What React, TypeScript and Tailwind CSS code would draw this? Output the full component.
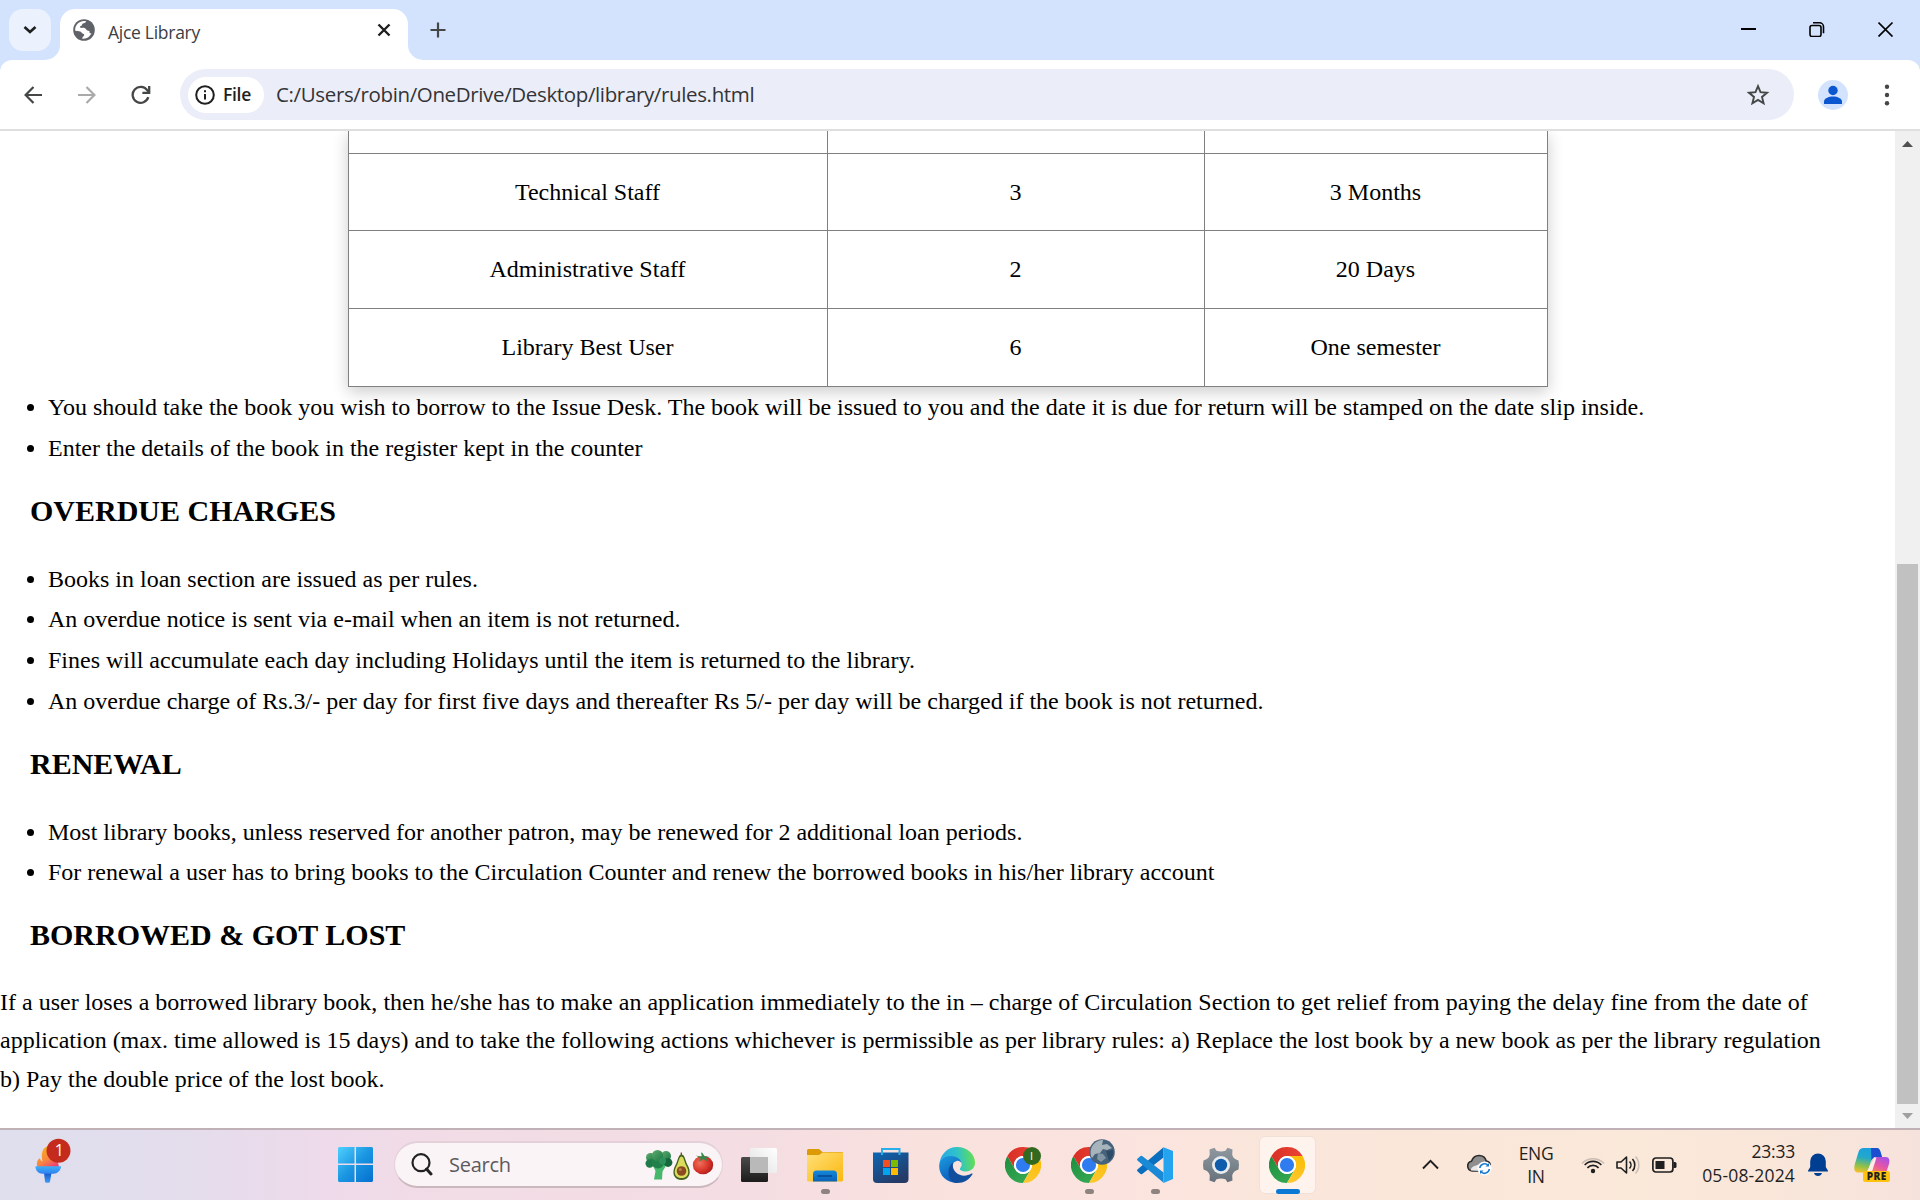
import React from "react";

const rows = [
  ["Technical Staff", "3", "3 Months"],
  ["Administrative Staff", "2", "20 Days"],
  ["Library Best User", "6", "One semester"],
];

function Item({ children }: { children: React.ReactNode }) {
  return (
    <li className="flex h-[40.8px] items-center whitespace-nowrap pl-[27px]">
      <span className="mr-[14px] mt-[1px] size-[7px] shrink-0 rounded-full bg-black" />
      <span>{children}</span>
    </li>
  );
}

function Heading({ children }: { children: React.ReactNode }) {
  return <h2 className="flex h-[89.7px] items-center pb-[5.5px] pl-[30px] text-[30px] font-bold">{children}</h2>;
}

function Chrome({ id }: { id: string }) {
  const d = "M0,-9 L15.59,-9 A18 18 0 0 0 -15.59,-9 L-7.79,4.5 A9 9 0 0 1 0,-9 Z";
  return (
    <svg width="36" height="36" viewBox="-18 -18 36 36">
      <defs>
        <linearGradient id={`r${id}`} x1="0" y1="0" x2="1" y2="0">
          <stop offset="0" stopColor="#d93025" />
          <stop offset="1" stopColor="#ea4335" />
        </linearGradient>
        <linearGradient id={`g${id}`} x1="0" y1="0" x2="1" y2="0">
          <stop offset="0" stopColor="#34a853" />
          <stop offset="1" stopColor="#1e8e3e" />
        </linearGradient>
        <linearGradient id={`y${id}`} x1="0" y1="0" x2="1" y2="0">
          <stop offset="0" stopColor="#fbbc04" />
          <stop offset="1" stopColor="#fcc934" />
        </linearGradient>
      </defs>
      <circle r="12" fill="#fff" />
      <path d={d} fill={`url(#g${id})`} transform="rotate(-120)" />
      <path d={d} fill={`url(#y${id})`} transform="rotate(120)" />
      <path d={d} fill={`url(#r${id})`} />
      <circle r="9" fill="#fff" />
      <circle r="7.1" fill="#2f7cf0" />
    </svg>
  );
}

function Slot({ children, mark }: { children: React.ReactNode; mark?: "dot" | "active" }) {
  return (
    <div className="flex h-full w-[66px] items-center justify-center">
      <div
        className={
          mark === "active"
            ? "relative flex h-[58px] w-[57px] items-center justify-center rounded-[6px] border border-[#f0e0d8] bg-[#fef3ed]"
            : "relative flex h-[58px] w-[57px] items-center justify-center"
        }
      >
        {children}
        {mark === "dot" && <span className="absolute bottom-0 left-[24px] h-[5px] w-[9px] rounded-full bg-[#8f8380]" />}
        {mark === "active" && <span className="absolute -bottom-px left-[16px] h-[5px] w-[24px] rounded-full bg-[#0b78d4]" />}
      </div>
    </div>
  );
}

function TabStrip() {
  return (
    <div className="flex h-[60px] bg-[#d3e3fd] font-['Open_Sans',sans-serif]">
      <div className="ml-[9px] mt-[9px] flex size-[42px] items-center justify-center rounded-[14px] bg-[#ebf2fe]">
        <svg width="14" height="10" viewBox="0 0 14 10" fill="none" stroke="#1f1f1f" strokeWidth="2.6">
          <path d="M1.5 2l5.5 5 5.5-5" />
        </svg>
      </div>
      <div className="flex w-[9px] items-end">
        <svg className="-ml-[6px] shrink-0" width="15" height="15" viewBox="0 0 15 15">
          <path d="M15 0v15H0A15 15 0 0 0 15 0z" fill="#fff" />
        </svg>
      </div>
      <div className="mt-[9px] flex h-[51px] w-[348px] items-start rounded-t-[15px] bg-white pl-[13px]">
        <svg className="mt-[10px]" width="22" height="22" viewBox="0 0 22 22">
          <circle cx="11" cy="11" r="10.8" fill="#5f6368" />
          <path d="M13.2 2.2c-.3 1.5-1.8 1.9-3.4 2.4-.9.4-.4 1.7-1.3 2.2-.9.6-1.8.6-1.5 1.5.4 1 2.6.4 4.4.6 1.9.3 1.6 2.2 3 2.6 1.5.3 2.6.6 2.1 2-.2 1 1.2 1 2 .6a9 9 0 0 1-9.3 5.6c.3-1.5.7-2.2 1.5-2.7.9-.7.6-1.9-.5-2.2-2-.5-1.5-2.2-3-2.4-1.7-.2-3.3-.2-5.1-1A9 9 0 0 1 13.2 2.2z" fill="#fff" />
        </svg>
        <span className="ml-[13px] mt-[11px] text-[17.5px] leading-[24px] tracking-[-0.28px] text-[#3c4043]">Ajce Library</span>
        <svg className="ml-auto mr-[17px] mt-[14px]" width="14" height="14" viewBox="0 0 14 14" stroke="#1f1f1f" strokeWidth="2.4">
          <path d="M1.5 1.5l11 11M12.5 1.5l-11 11" />
        </svg>
      </div>
      <div className="flex w-[15px] items-end">
        <svg width="15" height="15" viewBox="0 0 15 15">
          <path d="M0 0v15h15A15 15 0 0 1 0 0z" fill="#fff" />
        </svg>
      </div>
      <svg className="ml-[7px] mt-[22px]" width="16" height="16" viewBox="0 0 16 16" stroke="#444746" strokeWidth="2.2">
        <path d="M8 .5v15M.5 8h15" />
      </svg>
      <div className="ml-auto mr-[26px] mt-[21px] flex">
        <svg className="mr-[52px]" width="16" height="16" viewBox="0 0 16 16">
          <path d="M0 7h15v2H0z" fill="#000" />
        </svg>
        <svg className="mr-[53px]" width="16" height="16" viewBox="0 0 16 16" fill="none" stroke="#000" strokeWidth="1.6">
          <rect x="1" y="4.5" width="11" height="11" rx="2" />
          <path d="M4 1.800h6.500a4 4 0 0 1 4 4V12.300" />
        </svg>
        <svg width="16" height="16" viewBox="0 0 16 16" stroke="#000" strokeWidth="1.7">
          <path d="M.5 1.500l14 14M14.500 1.500l-14 14" />
        </svg>
      </div>
    </div>
  );
}

function Toolbar() {
  return (
    <div className="flex h-[69px] bg-[#d3e3fd]">
      <div className="flex w-full items-center rounded-t-[12px] bg-white font-['Open_Sans',sans-serif]">
        <svg className="ml-[24px]" width="18" height="18" viewBox="0 0 18 18" fill="none" stroke="#444746" strokeWidth="2.2">
          <path d="M18 9H2M9.500 1L1.600 9l7.900 8" />
        </svg>
        <svg className="ml-[36px]" width="18" height="18" viewBox="0 0 18 18" fill="none" stroke="#a9abab" strokeWidth="2.2">
          <path d="M0 9h16M8.500 1l7.900 8-7.900 8" />
        </svg>
        <svg className="ml-[35px]" width="20" height="20" viewBox="0 0 20 20" fill="none" stroke="#444746" strokeWidth="2.3">
          <path d="M17.300 12.200A8 8 0 1 1 16.200 5.200L18 7.200" />
          <path d="M18.200 1v6.800h-6.800" />
        </svg>
        <div className="ml-[29px] flex h-[51px] w-[1614px] items-center rounded-full bg-[#ebeef8] pl-[8px]">
          <div className="flex h-[36px] w-[76px] items-center rounded-full bg-white pl-[7px]">
            <svg width="20" height="20" viewBox="0 0 20 20" fill="none" stroke="#1f1f1f" strokeWidth="2">
              <circle cx="10" cy="10" r="8.8" />
              <path d="M10 9v5.500M10 5.300v2" />
            </svg>
            <span className="ml-[8px] text-[17.5px] font-semibold leading-none tracking-[-0.3px] text-[#1f1f1f]">File</span>
          </div>
          <span className="ml-[12px] whitespace-nowrap text-[20.5px] leading-none tracking-[-0.36px] text-[#333437]">
            C:/Users/robin/OneDrive/Desktop/library/rules.html
          </span>
          <svg className="ml-auto mr-[24px]" width="24" height="24" viewBox="0 0 24 24" fill="none" stroke="#444746" strokeWidth="1.9">
            <path d="M12 3.200l2.500 6 6.500.5-5 4.200 1.600 6.400L12 16.900l-5.600 3.400L8 13.900 3 9.700l6.500-.5z" />
          </svg>
        </div>
        <div className="ml-[24px] size-[30px] overflow-hidden rounded-full bg-[#d3e3fd]">
          <svg width="30" height="30" viewBox="0 0 30 30" fill="#0b57d0">
            <circle cx="15" cy="10.5" r="4.7" />
            <path d="M6 24v-2.500c0-3 4.500-5 9-5s9 2 9 5V24z" />
          </svg>
        </div>
        <svg className="ml-[36px]" width="6" height="22" viewBox="0 0 6 22" fill="#444746">
          <circle cx="3" cy="2.7" r="2.2" />
          <circle cx="3" cy="11" r="2.2" />
          <circle cx="3" cy="19.3" r="2.2" />
        </svg>
      </div>
    </div>
  );
}

function Page() {
  return (
    <div className="h-[997px] w-[1895px] overflow-hidden bg-white font-['Liberation_Serif',serif] text-[24px] text-black">
      <div className="ml-[348px] w-[1200px] border-x border-b border-[#808080] text-center shadow-[0_5px_15px_rgba(0,0,0,0.2)]">
        <div className="grid h-[22px] grid-cols-[479px_1fr_342px]">
          <div className="border-r border-[#808080]" />
          <div className="border-r border-[#808080]" />
          <div />
        </div>
        {rows.map((r, i) => (
          <div
            key={r[0]}
            className={
              i === 0
                ? "grid h-[77px] grid-cols-[479px_1fr_342px] border-t border-[#808080]"
                : "grid h-[78px] grid-cols-[479px_1fr_342px] border-t border-[#808080]"
            }
          >
            {r.map((c, j) => (
              <div
                key={c}
                className={
                  j < 2
                    ? "flex items-center justify-center border-r border-[#808080] pb-[1px] pr-[1px]"
                    : "flex items-center justify-center pb-[1px] pr-[1px]"
                }
              >
                {c}
              </div>
            ))}
          </div>
        ))}
      </div>
      <ul>
        <Item>You should take the book you wish to borrow to the Issue Desk. The book will be issued to you and the date it is due for return will be stamped on the date slip inside.</Item>
        <Item>Enter the details of the book in the register kept in the counter</Item>
      </ul>
      <Heading>OVERDUE CHARGES</Heading>
      <ul>
        <Item>Books in loan section are issued as per rules.</Item>
        <Item>An overdue notice is sent via e-mail when an item is not returned.</Item>
        <Item>Fines will accumulate each day including Holidays until the item is returned to the library.</Item>
        <Item>An overdue charge of Rs.3/- per day for first five days and thereafter Rs 5/- per day will be charged if the book is not returned.</Item>
      </ul>
      <Heading>RENEWAL</Heading>
      <ul>
        <Item>Most library books, unless reserved for another patron, may be renewed for 2 additional loan periods.</Item>
        <Item>For renewal a user has to bring books to the Circulation Counter and renew the borrowed books in his/her library account</Item>
      </ul>
      <Heading>BORROWED &amp; GOT LOST</Heading>
      <p className="whitespace-nowrap pt-[0.5px] leading-[38.5px]">
        <span className="tracking-[0.004px]">If a user loses a borrowed library book, then he/she has to make an application immediately to the in – charge of Circulation Section to get relief from paying the delay fine from the date of</span>
        <br />
        application (max. time allowed is 15 days) and to take the following actions whichever is permissible as per library rules: a) Replace the lost book by a new book as per the library regulation
        <br />
        b) Pay the double price of the lost book.
      </p>
    </div>
  );
}

function Scrollbar() {
  return (
    <div className="flex w-[25px] flex-col items-center bg-[#f0f0f0]">
      <svg className="mt-[10px]" width="11" height="6" viewBox="0 0 11 6"><path d="M0 6L5.500 0 11 6z" fill="#505050" /></svg>
      <div className="mt-[417px] h-[540px] w-[21px] bg-[#c1c1c1]" />
      <svg className="mt-[9px]" width="11" height="6" viewBox="0 0 11 6"><path d="M0 0l5.500 6L11 0z" fill="#a0a0a0" /></svg>
    </div>
  );
}

function TorchIcon() {
  return (
    <svg className="mb-[10px] ml-[34px] shrink-0" width="38" height="46" viewBox="0 0 38 46">
      <defs>
        <linearGradient id="fl" x1="0.2" y1="0" x2="0.8" y2="1">
          <stop offset="0" stopColor="#f8b31c" /><stop offset="0.6" stopColor="#f98540" /><stop offset="1" stopColor="#ee3c78" />
        </linearGradient>
        <linearGradient id="tb" x1="0" y1="0" x2="0" y2="1">
          <stop offset="0" stopColor="#3fb0f4" /><stop offset="1" stopColor="#2e7ff2" />
        </linearGradient>
        <linearGradient id="th" x1="0" y1="0" x2="0" y2="1">
          <stop offset="0" stopColor="#1557c8" /><stop offset="1" stopColor="#3f9cf5" />
        </linearGradient>
      </defs>
      <path d="M3.500 30c-1.500-4 0-7.500 2.500-9 .3 1.800 1 3 2.500 3.500C7 18 7.500 11 14 9c1 5 9 7 11 21z" fill="url(#fl)" />
      <path d="M10 36h7.500l-1.500 8.500a1.500 1.500 0 0 1-1.500 1.300h-2a1.500 1.500 0 0 1-1.500-1.300z" fill="url(#th)" />
      <path d="M1.500 29.300h25.500c.2 4-4 7.500-7.500 7.500h-11c-4 0-7.300-3.500-7-7.500z" fill="url(#tb)" />
      <circle cx="24.5" cy="13.7" r="12" fill="#c42b1c" />
      <text x="25.3" y="19.3" textAnchor="middle" fontSize="16" fill="#fff" fontFamily="Open Sans, sans-serif">1</text>
    </svg>
  );
}

function Foods() {
  return (
    <svg width="70" height="32" viewBox="0 0 70 32">
      <defs>
        <radialGradient id="tm" cx="0.35" cy="0.4" r="0.7">
          <stop offset="0" stopColor="#f0705a" /><stop offset="0.6" stopColor="#d8352a" /><stop offset="1" stopColor="#a81a18" />
        </radialGradient>
        <linearGradient id="br" x1="0" y1="0" x2="1" y2="1">
          <stop offset="0" stopColor="#5fae6e" /><stop offset="1" stopColor="#1c7646" />
        </linearGradient>
      </defs>
      <path d="M7 15l3.500 7-1.500 8.500h8l.5-8L22 15z" fill="#45b86b" />
      <circle cx="5.500" cy="8.500" r="4.500" fill="url(#br)" />
      <circle cx="21" cy="7" r="5" fill="url(#br)" />
      <circle cx="4.700" cy="14.500" r="4.200" fill="#1f7c49" />
      <circle cx="23" cy="13.500" r="4.400" fill="#14683c" />
      <circle cx="13" cy="13" r="6.500" fill="#22804a" />
      <circle cx="12.500" cy="6.500" r="5.600" fill="url(#br)" />
      <circle cx="17.500" cy="12" r="3.500" fill="#2f915a" />
      <path d="M36.500 5.500c3 0 3.500 5 5.500 9.500 2.500 4 3.500 8 2 11.500-2.500 6-12.500 6-15 0-1.500-3.500 0-8 2-11.500 2-4.500 2.500-9.500 5.500-9.500z" fill="#47611e" />
      <path d="M36.500 7.500c2 0 2.700 4.500 4.200 8 2.300 4 3.300 7.500 2 10.200-2.200 4.500-10.200 4.500-12.400 0-1.300-2.700-.3-6.200 2-10.200 1.500-3.500 2.200-8 4.200-8z" fill="#d9dc5c" />
      <circle cx="36.500" cy="22" r="4.800" fill="#8c4a20" /><circle cx="35.300" cy="20.500" r="1.600" fill="#bd7c46" />
      <path d="M36.300 6V3.500" stroke="#6b4423" strokeWidth="1.3" />
      <ellipse cx="58" cy="16" rx="10.200" ry="9.300" fill="url(#tm)" />
      <path d="M57 8l-6-1.500 4.500 3-1 3 3.500-2.500 5 2.500-2-3.500 4-1-5.500-.8L57.500 4l-1.500-.5z" fill="#2f8a4c" />
    </svg>
  );
}

function Taskbar() {
  return (
    <div className="flex h-[72px] items-center border-t-2 border-[#bfb1b6] bg-[linear-gradient(90deg,#dfdfee_0%,#e3ddec_9%,#eedaea_17%,#f2dce5_24%,#f4dde3_38%,#f9e1de_48%,#fbe4df_58%,#fae6da_68%,#fae8d9_85%,#f9e6da_94%,#f6e2dc_100%)] pb-px font-['Open_Sans',sans-serif]">
      <TorchIcon />
      <svg className="ml-[266px] shrink-0" width="35" height="35" viewBox="0 0 35 35">
        <defs>
          <linearGradient id="win" gradientUnits="userSpaceOnUse" x1="0" y1="0" x2="35" y2="35">
            <stop offset="0" stopColor="#4fd0ff" /><stop offset="0.5" stopColor="#1b96e2" /><stop offset="1" stopColor="#0470cf" />
          </linearGradient>
        </defs>
        <path d="M1 0h15.500v16.500H0V1zM18 0h16l1 1v15.500H18zM0 18h16.500v17H1l-1-1zM18 18h17v16l-1 1H18z" fill="url(#win)" />
      </svg>
      <div className="ml-[21px] flex h-[47px] w-[329px] shrink-0 items-center rounded-full border-2 border-x border-[#e4d0d9] border-b-[#cbb7be] bg-[#faf4f6] pl-[16px]">
        <svg width="22" height="23" viewBox="0 0 22 23" fill="none" stroke="#222">
          <circle cx="10" cy="9.700" r="8.500" strokeWidth="2.2" />
          <path d="M15.500 16l4.500 5" strokeWidth="3" strokeLinecap="round" />
        </svg>
        <span className="ml-[16px] text-[20px] leading-none tracking-[-0.25px] text-[#5d5a5c]">Search</span>
        <div className="ml-auto mr-[7px]"><Foods /></div>
      </div>
      <div className="ml-[3px] flex h-full shrink-0">
        <Slot>
          <svg width="36" height="36" viewBox="0 0 36 36">
            <defs>
              <linearGradient id="tv" x1="0" y1="0" x2="0" y2="1"><stop offset="0" stopColor="#4a4a4a" /><stop offset="1" stopColor="#1c1c1c" /></linearGradient>
              <linearGradient id="tw" x1="0" y1="1" x2="1" y2="0"><stop offset="0" stopColor="#e0e0e0" /><stop offset="1" stopColor="#fff" /></linearGradient>
            </defs>
            <rect y="10" width="27" height="25" rx="1.5" fill="url(#tv)" />
            <rect x="9" y="1" width="27" height="25" rx="1.5" fill="url(#tw)" />
            <path d="M9 10h18v16H10l-1-1z" fill="#b9b9b9" />
          </svg>
        </Slot>
        <Slot mark="dot">
          <svg width="36" height="36" viewBox="0 0 36 36">
            <defs>
              <linearGradient id="fo" x1="0" y1="0" x2="1" y2="1"><stop offset="0" stopColor="#ffe07a" /><stop offset="1" stopColor="#fbb80e" /></linearGradient>
              <linearGradient id="fb" x1="0" y1="0" x2="0" y2="1"><stop offset="0" stopColor="#1488dc" /><stop offset="1" stopColor="#0a62b8" /></linearGradient>
            </defs>
            <path d="M0 3.500A1.500 1.500 0 0 1 1.500 2H12l3.500 3H35a1 1 0 0 1 1 1v6H0z" fill="#dc9a06" />
            <path d="M0 8h12l3.500-2.500H36V33a1.500 1.500 0 0 1-1.500 1.500h-33A1.500 1.500 0 0 1 0 33z" fill="url(#fo)" />
            <path d="M6 34.500V27a3.500 3.500 0 0 1 3.500-3.500h17A3.500 3.500 0 0 1 30 27v7.500z" fill="url(#fb)" />
            <path d="M10.500 29h14.500" stroke="#084f98" strokeWidth="1.8" />
          </svg>
        </Slot>
        <Slot>
          <svg width="36" height="36" viewBox="0 0 36 36">
            <defs>
              <linearGradient id="st" x1="0" y1="0" x2="0.6" y2="1"><stop offset="0" stopColor="#0b67b6" /><stop offset="1" stopColor="#263a66" /></linearGradient>
            </defs>
            <path d="M0 5.500h35.500V32a4 4 0 0 1-4 4H4a4 4 0 0 1-4-4z" fill="url(#st)" />
            <path d="M9 8V2h17.500v6" fill="none" stroke="#28aeea" strokeWidth="2" />
            <path d="M10 13h7v7h-7z" fill="#f25022" /><path d="M18 13h7v7h-7z" fill="#7fba00" />
            <path d="M10 21h7v7h-7z" fill="#00a4ef" /><path d="M18 21h7v7h-7z" fill="#ffb900" />
          </svg>
        </Slot>
        <Slot>
          <svg width="36" height="36" viewBox="0 0 36 36">
            <defs>
              <linearGradient id="e1" x1="0" y1="0.3" x2="1" y2="0.2"><stop offset="0" stopColor="#2aa8e6" /><stop offset="0.5" stopColor="#2fc3c8" /><stop offset="1" stopColor="#68e04a" /></linearGradient>
              <linearGradient id="e2" x1="0" y1="0" x2="0.5" y2="1"><stop offset="0" stopColor="#1b9ce0" /><stop offset="1" stopColor="#0c59b8" /></linearGradient>
            </defs>
            <path d="M0.500 17C1.200 7.500 8.500 0 18 0c10.500 0 18 7.500 18 15.500 0 5.500-4 9-9 9-4 0-6.500-1.400-6-3 .4-1.200 1.700-1.800 1.700-4.500 0-4-4-7-10-7C6.500 10 2 13.500.5 17z" fill="url(#e1)" />
            <path d="M0.200 19C.3 13.500 5 9 11.500 9c7 0 11 4 11.200 7.500-1-2-3-3-5-2.500-6 1.500-8.500 10 1 21.900C8 36.300 0 29 0.200 19z" fill="url(#e2)" />
            <path d="M14.500 15.500c-1.500 3.500-.5 7 2.500 10 4.500 4 10.500 4 15.600 1 1-.4 1.200.3.700 1-3 5-8.500 8.500-15 8.500-6.500 0-9-6.500-8.800-11 .2-5 2.500-8.200 5-9.500z" fill="#124e9e" />
          </svg>
        </Slot>
        <Slot>
          <Chrome id="a" />
          <span className="absolute left-[28px] top-[11px] flex size-[18px] items-center justify-center rounded-full bg-[#33691e] text-[11px] leading-none text-white">I</span>
        </Slot>
        <Slot mark="dot">
          <Chrome id="b" />
          <svg className="absolute left-[28px] top-[3px]" width="26" height="26" viewBox="0 0 26 26">
            <circle cx="13" cy="13" r="12.8" fill="#47637c" />
            <path d="M4 6c3-4 7-5 10-5l-1 5 5-1 5 4-5 2-4-1-3 4-5 1-3 4c-2-3-2-9 1-13z" fill="#a7b4bb" />
            <path d="M9 14l5 1 3 4-5 4-4-3z" fill="#8296a3" />
            <path d="M17 12l7-1c1 5-1 8-4 11z" fill="#2d4a66" />
          </svg>
        </Slot>
        <Slot mark="dot">
          <svg width="36" height="36" viewBox="0 0 36 36">
            <path d="M26.500 10.500L5.500 26.700a2 2 0 0 1-2.600-.1L.700 24.600a1.600 1.600 0 0 1 0-2.400L26.500.200z" fill="#0a6fbf" />
            <path d="M26.500 25.500L5.500 9.300a2 2 0 0 0-2.600.1L.7 11.400a1.600 1.600 0 0 0 0 2.400L26.500 35.800z" fill="#1b8ad6" />
            <path d="M26.500.200L36 4v28l-9.500 4z" fill="#24a3ee" />
          </svg>
        </Slot>
        <Slot>
          <svg width="36" height="36" viewBox="-18 -18 36 36">
            <defs>
              <linearGradient id="ge" x1="0" y1="0" x2="0" y2="1"><stop offset="0" stopColor="#8f989f" /><stop offset="1" stopColor="#66717b" /></linearGradient>
            </defs>
            <path
              d="M-11.500 -15.500L-6.500 -17.200 -4.500 -14.200Q0 -12.800 4.500 -14.200L6.500 -17.200 11.500 -15.500 11.200 -10.500Q12 -6 17.500 -4.500L18 0 17.500 4.500Q12 6 11.200 10.500L11.500 15.500 6.500 17.200 4.500 14.200Q0 12.800 -4.500 14.200L-6.500 17.200 -11.500 15.500 -11.200 10.500Q-12 6 -17.500 4.500L-18 0 -17.500 -4.500Q-12 -6 -11.200 -10.500Z"
              fill="url(#ge)"
            />
            <circle r="9" fill="#e8ecef" />
            <circle r="6.2" fill="#0f5cad" />
          </svg>
        </Slot>
        <Slot mark="active"><Chrome id="c" /></Slot>
      </div>
      <svg className="ml-[102px] shrink-0" width="17" height="11" viewBox="0 0 17 11" fill="none" stroke="#1f1f1f" strokeWidth="1.9">
        <path d="M1 9.500l7.500-7.700L16 9.500" />
      </svg>
      <svg className="ml-[27px] shrink-0" width="26" height="22" viewBox="0 0 26 22">
        <path d="M6 17a5 5 0 0 1-.5-9.800C7 3 10 1.500 13 1.500c4 0 6.500 2.500 7.200 5.500 2.500 0 4 2 4 4L14 17z" fill="#8f8f8f" stroke="#2b2b2b" strokeWidth="1.6" />
        <path d="M5 16.500c-.5-3 3-4.500 5-5l6-2.500 7 1.500-6 6.500z" fill="#e9e9e9" />
        <circle cx="18.500" cy="14.500" r="7" fill="#fff" />
        <path d="M13.800 14a4.800 4.800 0 0 1 8.400-2.500M23.300 15a4.800 4.800 0 0 1-8.500 2.500" fill="none" stroke="#1a7ad0" strokeWidth="1.6" />
        <path d="M23 9v3.500h-3.500zM14 20v-3.500h3.500z" fill="#1a7ad0" />
      </svg>
      <div className="ml-[18px] w-[52px] shrink-0 text-center text-[17.5px] leading-[23px] tracking-[-0.3px] text-[#1f1f1f]">
        ENG<br />IN
      </div>
      <svg className="ml-[19px] shrink-0" width="24" height="18" viewBox="0 0 24 18" fill="none" stroke="#1f1f1f" strokeWidth="1.7">
        <path d="M1 7.500a15 15 0 0 1 22 0" stroke="#c9bcb2" strokeWidth="1.4" />
        <path d="M3.700 9a11.500 11.500 0 0 1 16.600 0" />
        <path d="M6.400 11.800a7.700 7.700 0 0 1 11.200 0" />
        <circle cx="12" cy="15" r="2.2" fill="#1f1f1f" stroke="none" />
      </svg>
      <svg className="ml-[11px] shrink-0" width="25" height="20" viewBox="0 0 25 20" fill="none" stroke="#1f1f1f" strokeWidth="1.6" strokeLinejoin="round">
        <path d="M1 7h4l5.500-5v16L5 13H1z" />
        <path d="M13.500 6.500a5 5 0 0 1 0 7M16.500 4a9 9 0 0 1 0 12" />
        <path d="M19.500 1.500a12.500 12.500 0 0 1 0 17" stroke="#c9bcb2" strokeWidth="1.4" />
      </svg>
      <svg className="ml-[11px] shrink-0" width="25" height="16" viewBox="0 0 25 16">
        <rect x="0.9" y="1" width="20" height="14" rx="3" fill="none" stroke="#1f1f1f" strokeWidth="1.7" />
        <rect x="3.5" y="4" width="9" height="8" fill="#1f1f1f" />
        <path d="M21.500 5h1.500a1.500 1.500 0 0 1 1.500 1.500v3A1.500 1.500 0 0 1 23 11h-1.500z" fill="#1f1f1f" />
      </svg>
      <div className="ml-[18px] w-[100px] shrink-0 whitespace-nowrap pb-[3px] text-right text-[17.5px] leading-[24px] text-[#1f1f1f]">
        <div className="tracking-[-0.2px]">23:33</div>
        <div className="tracking-[0.15px]">05-08-2024</div>
      </div>
      <svg className="ml-[13px] shrink-0" width="20" height="24" viewBox="0 0 20 24" fill="#003e92">
        <path d="M10 .5a7.800 7.800 0 0 1 7.800 7.800V14l2.200 3.800v.7H0v-.7L2.200 14V8.300A7.800 7.800 0 0 1 10 .5zM6 20h8c-.5 2-2 3-4 3s-3.500-1-4-3z" />
      </svg>
      <svg className="ml-[26px] shrink-0" width="36" height="36" viewBox="0 0 36 36">
        <defs>
          <linearGradient id="c1" x1="0.5" y1="0" x2="0.3" y2="1"><stop offset="0" stopColor="#1c9fe0" /><stop offset="0.4" stopColor="#22a9c8" /><stop offset="0.75" stopColor="#8fc14a" /><stop offset="1" stopColor="#f0c02a" /></linearGradient>
          <linearGradient id="c2" x1="0.8" y1="0" x2="0.2" y2="1"><stop offset="0" stopColor="#a451e8" /><stop offset="0.5" stopColor="#e654a6" /><stop offset="1" stopColor="#fb8a4c" /></linearGradient>
        </defs>
        <path d="M9.500 1h13c2.500 0 3.500 2 4.200 4.500L28 10h-6.500c-3 0-4.500 4-6 9-1 4-2.500 6.500-5 6.500H4c-4 0-4.500-4-3-9L4.500 5C5.500 2 7 1 9.500 1z" fill="url(#c1)" />
        <path d="M17 1h5.500c2.500 0 3.500 2 4.200 4.500L28 10h-6.500c-1.800 0-3 1.500-4 3.500z" fill="#1b4fd0" />
        <path d="M22 10h9.500c4 0 4.500 3.500 3.500 7l-3 9H12c2.500 0 3.500-3 4.500-6.500S19 10 22 10z" fill="url(#c2)" />
        <path d="M20 10.500h2.500l-4.500 14h-5z" fill="#fbeee8" />
        <rect x="9" y="24" width="27" height="11" rx="2.5" fill="#ffc20e" />
        <text x="22.7" y="33" textAnchor="middle" fontSize="10" fontWeight="800" letterSpacing="0.5" fill="#1f1f1f" fontFamily="Open Sans, sans-serif">PRE</text>
      </svg>
    </div>
  );
}

export default function App() {
  return (
    <div className="flex h-[1200px] w-[1920px] flex-col overflow-hidden bg-white">
      <TabStrip />
      <Toolbar />
      <div className="h-[2px] shrink-0 bg-[#dfdfdf]" />
      <div className="flex h-[997px] shrink-0">
        <Page />
        <Scrollbar />
      </div>
      <Taskbar />
    </div>
  );
}
